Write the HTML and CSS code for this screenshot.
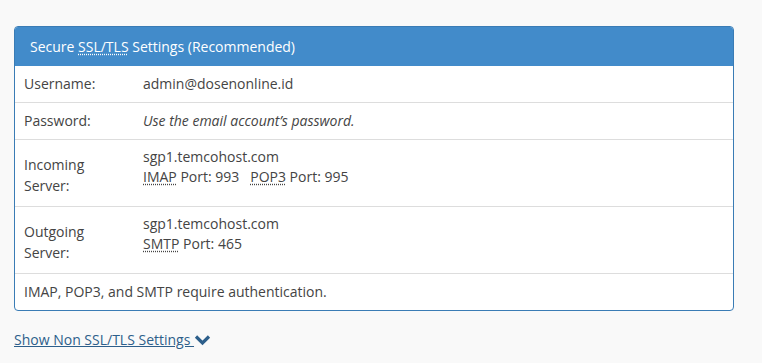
FILE: index.html
```html
<!DOCTYPE html>
<html lang="en">
<head>
<meta charset="UTF-8">
<meta name="viewport" content="width=device-width, initial-scale=1.0">
<title>Mail Client Settings</title>
<link rel="stylesheet" href="styles.css">
</head>
<body>
    <div class="page">
        <div class="panel">
            <div class="panel-heading">Secure <abbr title="Secure Sockets Layer/Transport Layer Security">SSL/TLS</abbr> Settings (Recommended)</div>
            <div class="row">
                <div class="label">Username:</div>
                <div class="value">admin@dosenonline.id</div>
            </div>
            <div class="row">
                <div class="label">Password:</div>
                <div class="value"><em>Use the email account’s password.</em></div>
            </div>
            <div class="row tall">
                <div class="label">Incoming Server:</div>
                <div class="value">
                    sgp1.temcohost.com<br>
                    <abbr title="Internet Message Access Protocol">IMAP</abbr> Port: 993 &nbsp;&nbsp;<abbr title="Post Office Protocol 3">POP3</abbr> Port: 995
                </div>
            </div>
            <div class="row tall">
                <div class="label">Outgoing Server:</div>
                <div class="value">
                    sgp1.temcohost.com<br>
                    <abbr title="Simple Mail Transfer Protocol">SMTP</abbr> Port: 465
                </div>
            </div>
            <div class="row note">IMAP, POP3, and SMTP require authentication.</div>
        </div>
        <div class="toggle-line">
            <a class="toggle" href="#">Show Non SSL/TLS Settings&nbsp;</a><svg class="chevron" width="17" height="12" viewBox="0 0 17 12"><polyline points="2,2.5 8.5,9 15,2.5" fill="none" stroke="#2d5f8b" stroke-width="3.2"/></svg>
        </div>
    </div>
</body>
</html>
```

FILE: styles.css
```css
body {
    margin: 0;
    background-color: #f9f9f9;
    font-family: 'Open Sans', sans-serif;
    font-size: 14px;
    color: #444;
}
.page {
    padding: 26px 0 0 14px;
}
.panel {
    width: 718px;
    background-color: #fff;
    border: 1px solid #3a7cb5;
    border-radius: 4px;
    overflow: hidden;
}
.panel-heading {
    background-color: #428bca;
    color: #fff;
    height: 39px;
    line-height: 39px;
    padding: 0 15px;
}
abbr {
    text-decoration: underline dotted;
    text-underline-offset: 2px;
}
.row {
    display: grid;
    grid-template-columns: 119px 1fr;
    border-top: 1px solid #ddd;
    line-height: 20px;
    padding: 8px 0 8px;
}
.row:nth-child(2) {
    border-top: none;
    padding: 8px 0 8px;
}
.label {
    padding: 0 20px 0 9px;
    align-self: center;
}
.value {
    padding-left: 9px;
}
.row.tall {
    padding: 7px 0 0;
    min-height: 59px;
}
.tall .label {
    line-height: 21px;
    padding-bottom: 3px;
}
.row.note {
    display: block;
    padding: 8px 9px 8px;
}
.toggle-line {
    margin-top: 19px;
    line-height: 20px;
}
.toggle {
    color: #2d5f8b;
    text-decoration: underline;
}
.chevron {
    vertical-align: -1px;
}
```
